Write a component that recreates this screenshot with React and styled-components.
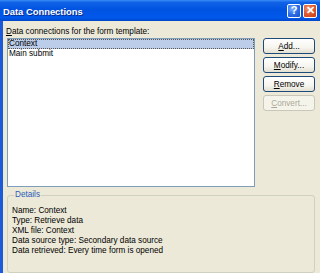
import React from 'react';
import styled, { createGlobalStyle } from 'styled-components';

const GlobalStyle = createGlobalStyle`
  html, body {
    margin: 0;
    padding: 0;
    width: 320px;
    height: 273px;
    overflow: hidden;
    background: #ece9d8;
  }
`;

const Window = styled.div`
  width: 320px;
  height: 273px;
  display: flex;
  flex-direction: column;
  overflow: hidden;
  background: #ece9d8;
  font-family: "Liberation Sans", Arial, sans-serif;
  font-size: 8.2px;
  color: #000;
`;

const TitleBar = styled.div`
  height: 21px;
  flex-shrink: 0;
  display: flex;
  align-items: center;
  padding: 0 3px 0 3px;
  background: linear-gradient(
    to bottom,
    #3a8cf8 0%,
    #0f62e6 12%,
    #0053e0 45%,
    #0058ec 85%,
    #0046c8 100%
  );
`;

const Title = styled.div`
  flex: 1;
  color: #fff;
  font-weight: bold;
  font-size: 9.4px;
  text-shadow: 1px 1px 0 #0a2a8a;
  padding-top: 1px;
`;

const CaptionButton = styled.div`
  width: 14px;
  height: 14px;
  margin-left: 2px;
  box-sizing: border-box;
  border: 1px solid #fff;
  border-radius: 2px;
  display: flex;
  align-items: center;
  justify-content: center;
  color: #fff;
  font-weight: bold;
  font-size: 11px;
  line-height: 1;
  background: ${p =>
    p.kind === 'close'
      ? 'radial-gradient(circle at 35% 30%, #f39a7a 0%, #e05a30 45%, #c63c14 100%)'
      : 'radial-gradient(circle at 35% 30%, #7fb0ff 0%, #2d6fe8 50%, #1a4fc8 100%)'};
`;

const Body = styled.div`
  flex: 1;
  display: flex;
  flex-direction: column;
  border-left: 3px solid #1c5ad8;
  padding: 5px 5px 0 4px;
  min-height: 0;
`;

const Label = styled.div`
  line-height: 11px;
  height: 11px;
  margin-left: -1px;
`;

const Key = styled.span`
  text-decoration: underline;
`;

const MainRow = styled.div`
  display: flex;
  gap: 8px;
  margin-top: 1px;
`;

const ListBox = styled.div`
  width: 248px;
  height: 149px;
  box-sizing: border-box;
  border: 1px solid #7f9db9;
  background: #fff;
`;

const ListItem = styled.div`
  height: 9.5px;
  line-height: 9.5px;
  padding-left: 1px;
  box-sizing: border-box;
  background: ${p => (p.selected ? '#bccdea' : 'transparent')};
  outline: ${p => (p.selected ? '1px dotted #555' : 'none')};
  outline-offset: -1px;
`;

const ButtonColumn = styled.div`
  display: flex;
  flex-direction: column;
  gap: 3px;
`;

const Button = styled.div`
  width: 52px;
  height: 16px;
  box-sizing: border-box;
  border: 1px solid ${p => (p.disabled ? '#c9c7ba' : '#1d4a7a')};
  border-radius: 3px;
  display: flex;
  align-items: center;
  justify-content: center;
  color: ${p => (p.disabled ? '#aca899' : '#000')};
  background: ${p =>
    p.disabled
      ? '#f5f4ea'
      : 'linear-gradient(to bottom, #ffffff 0%, #f6f5ef 60%, #e3e0d2 100%)'};
`;

const Group = styled.fieldset`
  margin: 3px 0 0 0;
  padding: 6px 4px 0 4px;
  border: 1px solid #d0d0bf;
  border-radius: 3px;
  flex: 1;
  min-height: 0;
`;

const Legend = styled.legend`
  color: #2c5bb8;
  padding: 0 1px;
  margin-left: 2px;
  line-height: 10px;
`;

const DetailLine = styled.div`
  line-height: 10px;
  height: 10px;
`;

const details = [
  'Name: Context',
  'Type: Retrieve data',
  'XML file: Context',
  'Data source type: Secondary data source',
  'Data retrieved: Every time form is opened',
];

export default function App() {
  return (
    <Window>
      <GlobalStyle />
      <TitleBar>
        <Title>Data Connections</Title>
        <CaptionButton kind="help">?</CaptionButton>
        <CaptionButton kind="close">✕</CaptionButton>
      </TitleBar>
      <Body>
        <Label>
          <Key>D</Key>ata connections for the form template:
        </Label>
        <MainRow>
          <ListBox>
            <ListItem selected>Context</ListItem>
            <ListItem>Main submit</ListItem>
          </ListBox>
          <ButtonColumn>
            <Button><Key>A</Key>dd...</Button>
            <Button><Key>M</Key>odify...</Button>
            <Button><Key>R</Key>emove</Button>
            <Button disabled><Key>C</Key>onvert...</Button>
          </ButtonColumn>
        </MainRow>
        <Group>
          <Legend>Details</Legend>
          {details.map(line => (
            <DetailLine key={line}>{line}</DetailLine>
          ))}
        </Group>
      </Body>
    </Window>
  );
}
